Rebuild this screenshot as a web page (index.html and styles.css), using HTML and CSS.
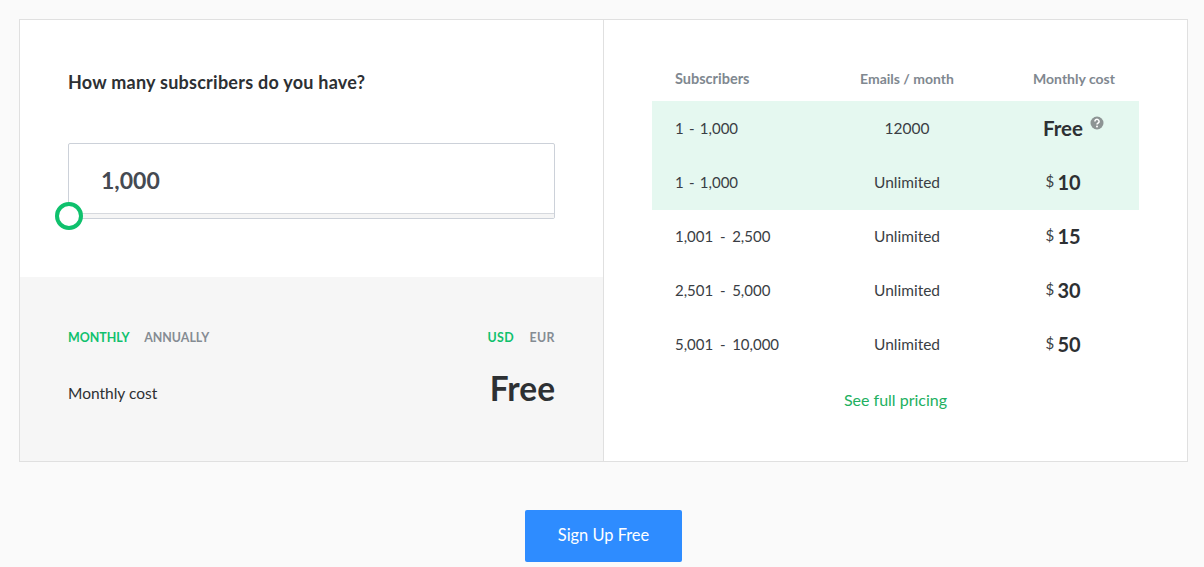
FILE: index.html
```html
<!DOCTYPE html>
<html lang="en">
<head>
    <meta charset="UTF-8">
    <title>Pricing</title>
    <link rel="stylesheet" href="styles.css">
</head>
<body>
    <div class="calculator">
        <div class="left-panel">
            <div class="slider-box">
                <h3>How many subscribers do you have?</h3>
                <div class="count-field">
                    <div class="count-value">1,000</div>
                    <div class="track"><span class="handle"></span></div>
                </div>
            </div>
            <div class="cost-box">
                <div class="toggles">
                    <div class="toggle-group">
                        <span class="active">MONTHLY</span>
                        <span>ANNUALLY</span>
                    </div>
                    <div class="toggle-group currency">
                        <span class="active">USD</span>
                        <span>EUR</span>
                    </div>
                </div>
                <div class="cost-row">
                    <span class="cost-label">Monthly cost</span>
                    <span class="cost-value">Free</span>
                </div>
            </div>
        </div>
        <div class="right-panel">
            <div class="price-row price-head">
                <div>Subscribers</div>
                <div>Emails / month</div>
                <div>Monthly cost</div>
            </div>
            <div class="price-row highlight">
                <div class="range-short">1 &nbsp;-&nbsp; 1,000</div>
                <div>12000</div>
                <div class="price"><b class="free">Free</b>
                    <svg class="help" width="14" height="14" viewBox="0 0 14 14"><circle cx="7" cy="7" r="6.5" fill="#8d9494"/><path d="M4.9 5.4a2.1 2 0 1 1 3.3 1.6c-.8.5-1.2.8-1.2 1.6" fill="none" stroke="#fff" stroke-width="1.5"/><circle cx="7" cy="10.6" r="1" fill="#fff"/></svg>
                </div>
            </div>
            <div class="price-row highlight">
                <div class="range-short">1 &nbsp;-&nbsp; 1,000</div>
                <div>Unlimited</div>
                <div class="price"><span class="dollar">$</span> <b>10</b></div>
            </div>
            <div class="price-row">
                <div>1,001 &nbsp;-&nbsp; 2,500</div>
                <div>Unlimited</div>
                <div class="price"><span class="dollar">$</span> <b>15</b></div>
            </div>
            <div class="price-row">
                <div>2,501 &nbsp;-&nbsp; 5,000</div>
                <div>Unlimited</div>
                <div class="price"><span class="dollar">$</span> <b>30</b></div>
            </div>
            <div class="price-row">
                <div>5,001 &nbsp;-&nbsp; 10,000</div>
                <div>Unlimited</div>
                <div class="price"><span class="dollar">$</span> <b>50</b></div>
            </div>
            <a class="full-pricing" href="#">See full pricing</a>
        </div>
    </div>
    <div class="signup">
        <a class="signup-btn" href="#">Sign Up Free</a>
    </div>
</body>
</html>
```
FILE: styles.css
```css
html, body {
    height: 567px;
    overflow: hidden;
}
body {
    margin: 0;
    padding: 19px 16px 0 19px;
    box-sizing: border-box;
    background-color: #fafafa;
    font-family: 'Lato', sans-serif;
    color: #2d3033;
}
.calculator {
    display: flex;
    height: 443px;
    box-sizing: border-box;
    background: #fff;
    border: 1px solid #e0e0e0;
}
.left-panel {
    width: 584px;
    box-sizing: border-box;
    border-right: 1px solid #e0e0e0;
    display: flex;
    flex-direction: column;
}
.slider-box {
    height: 257px;
    box-sizing: border-box;
    padding: 51px 48px 0;
}
h3 {
    margin: 0 0 50px;
    font-size: 18px;
    line-height: 22px;
    font-weight: 700;
    letter-spacing: 0.25px;
}
.count-field {
    position: relative;
    height: 76px;
    box-sizing: border-box;
    border: 1px solid #ccd1d9;
    border-radius: 2px;
}
.count-value {
    height: 69px;
    line-height: 72px;
    padding-left: 32px;
    font-size: 23px;
    font-weight: 700;
    color: #454a52;
}
.track {
    height: 4px;
    background: #f5f5f5;
    border-top: 1px solid #d6d9de;
}
.handle {
    position: absolute;
    left: -14px;
    top: 58px;
    width: 28px;
    height: 28px;
    box-sizing: border-box;
    background: #fff;
    border: 4.5px solid #0fc16d;
    border-radius: 50%;
}
.cost-box {
    flex: 1;
    background: #f6f6f6;
    padding: 52px 48px 0;
}
.toggles, .cost-row {
    display: flex;
    justify-content: space-between;
}
.toggles {
    font-size: 12.4px;
    line-height: 17px;
    font-weight: 700;
    color: #858c93;
}
.toggle-group span {
    margin-right: 12px;
}
.toggle-group span:last-child {
    margin-right: 0;
}
.toggle-group .active {
    color: #0fc16d;
}
.currency {
    letter-spacing: 0.4px;
}
.cost-row {
    align-items: center;
    margin-top: 22px;
}
.cost-label {
    font-size: 15.5px;
    padding-top: 10px;
}
.cost-value {
    font-size: 33.4px;
    line-height: 40px;
    font-weight: 700;
}
.right-panel {
    flex: 1;
    padding: 31px 48px 0;
    display: flex;
    flex-direction: column;
}
.price-row {
    display: grid;
    grid-template-columns: 141px 182px 130px;
    height: 54px;
    align-items: center;
    font-size: 15px;
    padding-left: 23px;
    color: #3a3e44;
    word-spacing: -0.5px;
}
.price-row .range-short {
    word-spacing: -1.2px;
}
.price-row div:nth-child(2), .price-row div:nth-child(3) {
    text-align: center;
}
.price-row div:nth-child(2) {
    font-size: 15.5px;
}
.price-row.price-head {
    height: 50px;
    box-sizing: border-box;
    padding-top: 4px;
    font-size: 14px;
    font-weight: 700;
    color: #808890;
    word-spacing: 0;
}
.price-head div:first-child {
    font-size: 14.5px;
    white-space: nowrap;
}
.price-row.price-head div:nth-child(2) {
    font-size: 14px;
}
.price-head div:last-child {
    padding-left: 22px;
    white-space: nowrap;
}
.highlight {
    background: #e5f8f0;
    box-shadow: 0 1px 0 #e5f8f0;
}
.price b {
    font-size: 20px;
    color: #2d3033;
}
.price .free {
    font-size: 20.5px;
}
.dollar {
    font-size: 15px;
    vertical-align: 3px;
}
.price {
    position: relative;
}
.help {
    position: absolute;
    margin: 0 0 0 7px;
}
.full-pricing {
    margin-top: 17px;
    text-align: center;
    font-size: 16px;
    line-height: 24px;
    color: #21b060;
    text-decoration: none;
}
.signup {
    margin-top: 48px;
    display: flex;
    justify-content: center;
}
.signup-btn {
    width: 157px;
    height: 52px;
    line-height: 50px;
    text-align: center;
    background: #2e8cff;
    color: #fff;
    font-size: 16.4px;
    border-radius: 2px;
    text-decoration: none;
}
```
